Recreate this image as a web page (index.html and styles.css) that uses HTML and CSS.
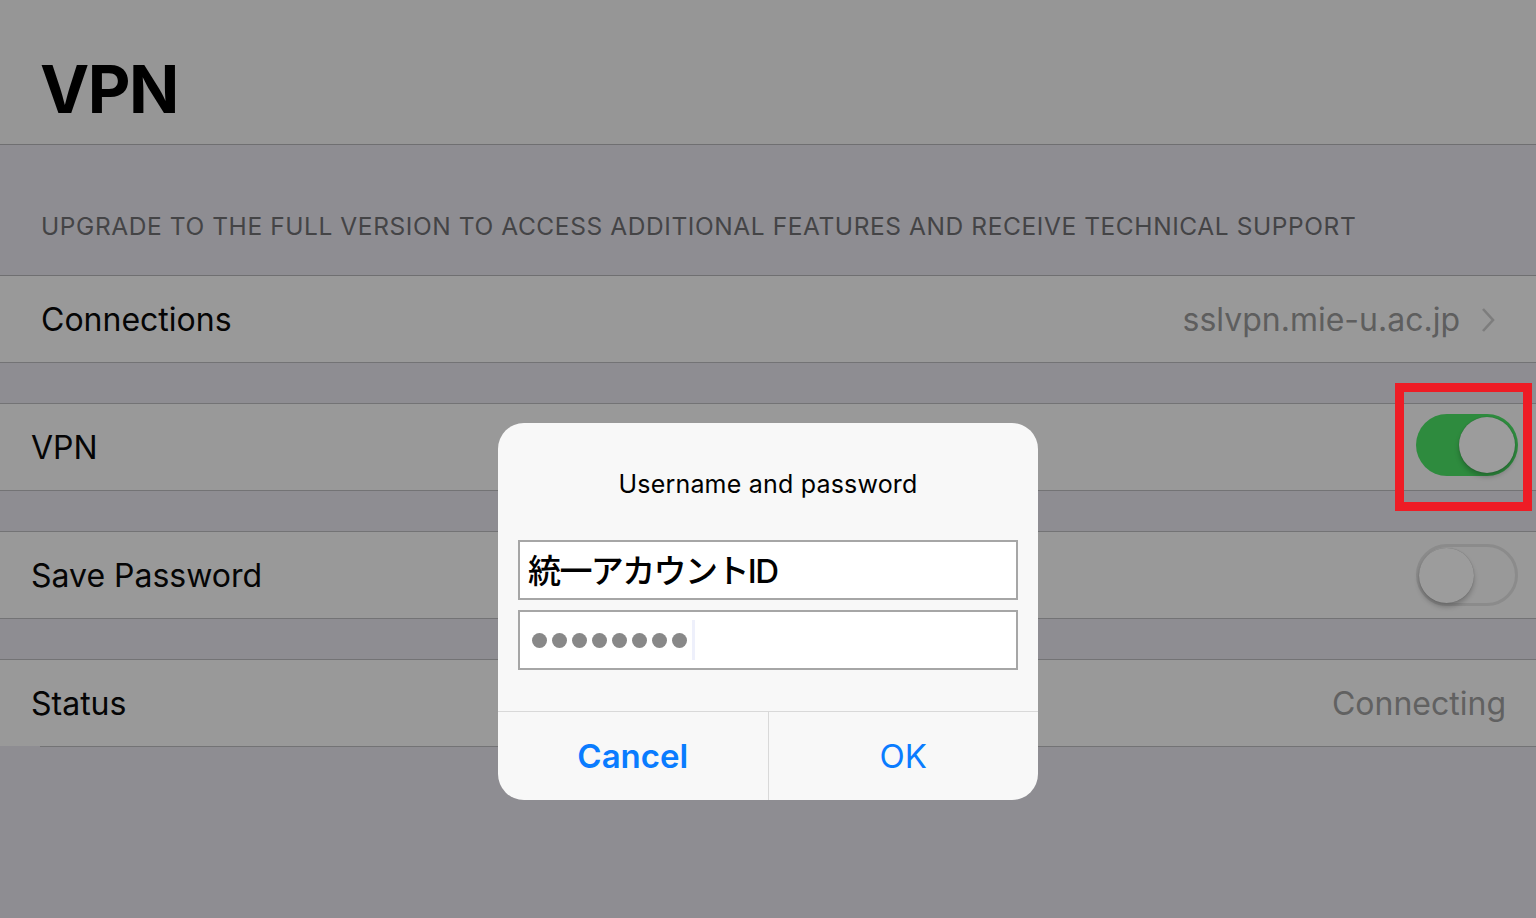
FILE: index.html
```html
<!DOCTYPE html>
<html lang="ja">
<head>
  <meta charset="UTF-8" />
  <title>VPN</title>
  <link rel="stylesheet" href="styles.css">
</head>
<body>
  <header class="nav-header">
    <h1>VPN</h1>
  </header>

  <div class="group-note">UPGRADE TO THE FULL VERSION TO ACCESS ADDITIONAL FEATURES AND RECEIVE TECHNICAL SUPPORT</div>

  <div class="cell cell-wide">
    <span class="cell-label">Connections</span>
    <span class="cell-detail">sslvpn.mie-u.ac.jp
      <svg class="chevron" width="16" height="26" viewBox="0 0 16 26"><path d="M3 2 L13 13 L3 24" fill="none" stroke="#7d7d7d" stroke-width="2.6"/></svg>
    </span>
  </div>

  <div class="spacer"></div>

  <div class="cell">
    <span class="cell-label">VPN</span>
    <div class="highlight">
      <div class="switch on"><div class="knob"></div></div>
    </div>
  </div>

  <div class="spacer"></div>

  <div class="cell">
    <span class="cell-label">Save Password</span>
    <div class="switch off"><div class="knob"></div></div>
  </div>

  <div class="spacer"></div>

  <div class="cell cell-last">
    <span class="cell-label">Status</span>
    <span class="cell-detail status">Connecting</span>
  </div>

  <div class="alert">
    <div class="alert-body">
      <div class="alert-title">Username and password</div>
      <div class="field field-user">統一アカウントID</div>
      <div class="field field-pass">
        <span class="dot"></span><span class="dot"></span><span class="dot"></span><span class="dot"></span>
        <span class="dot"></span><span class="dot"></span><span class="dot"></span><span class="dot"></span>
        <span class="caret"></span>
      </div>
    </div>
    <div class="alert-actions">
      <div class="alert-btn cancel">Cancel</div>
      <div class="alert-btn ok">OK</div>
    </div>
  </div>
</body>
</html>
```

FILE: styles.css
```css
body {
  margin: 0;
  width: 1536px;
  height: 918px;
  overflow: hidden;
  background: #8e8d92;
  font-family: Inter, "Noto Sans", "Noto Sans CJK JP", sans-serif;
  position: relative;
}

.nav-header {
  height: 144px;
  background: #969696;
  border-bottom: 1px solid #6f6f71;
  display: flex;
  align-items: flex-end;
}

.nav-header h1 {
  margin: 0 0 22px 40px;
  font-size: 66px;
  font-weight: 700;
  color: #000;
  letter-spacing: -1.5px;
  line-height: 1;
}

.group-note {
  height: 131px;
  padding-left: 41px;
  display: flex;
  align-items: center;
  padding-top: 32px;
  box-sizing: border-box;
  font-size: 24.5px;
  color: #444446;
  letter-spacing: 0.58px;
  border-bottom: 1px solid #6f6f71;
}

.cell {
  height: 86px;
  background: #999999;
  border-bottom: 1px solid #737375;
  display: flex;
  align-items: center;
  justify-content: space-between;
  padding: 0 18px 0 31px;
  font-size: 32px;
  color: #050505;
}

.cell-wide {
  padding-left: 41px;
  padding-right: 40px;
}

.spacer {
  height: 40px;
  border-bottom: 1px solid #737375;
}

.cell-last {
  border-bottom: none;
  position: relative;
  padding-right: 30px;
}

.cell-last::after {
  content: "";
  position: absolute;
  left: 40px;
  right: 0;
  bottom: -1px;
  height: 1px;
  background: #737375;
}

.cell-detail {
  color: #5e5e5e;
  display: flex;
  align-items: center;
  gap: 20px;
}

.chevron {
  margin-top: 2px;
}

.highlight {
  border: 9px solid #ee1c25;
  width: 137px;
  height: 128px;
  box-sizing: border-box;
  margin: -21px -14px -21px 0;
  display: flex;
  align-items: center;
  justify-content: flex-end;
  padding: 0 5px 4px 0;
}

.switch {
  width: 102px;
  height: 62px;
  border-radius: 31px;
  box-sizing: border-box;
  display: flex;
  align-items: center;
  padding: 3px;
}

.switch.on {
  background: #2e8b3e;
  justify-content: flex-end;
}

.switch.off {
  border: 3px solid #8b8b8b;
  padding: 0;
  justify-content: flex-start;
}

.switch .knob {
  width: 56px;
  height: 56px;
  border-radius: 50%;
  background: #9c9c9c;
  box-shadow: 0 4px 5px rgba(0, 0, 0, 0.22), 0 0 1px rgba(0, 0, 0, 0.3);
}

.switch.off .knob {
  width: 55px;
  height: 55px;
}

.status {
  color: #616161;
}

.alert {
  position: absolute;
  left: 498px;
  top: 423px;
  width: 540px;
  height: 377px;
  border-radius: 26px;
  background: #f8f8f8;
  overflow: hidden;
  display: flex;
  flex-direction: column;
}

.alert-body {
  flex: 1;
  padding: 46px 20px 0;
  display: flex;
  flex-direction: column;
  gap: 10px;
}

.alert-title {
  text-align: center;
  font-size: 25px;
  color: #000;
  margin-bottom: 31px;
  letter-spacing: 0.2px;
}

.field {
  height: 60px;
  box-sizing: border-box;
  border: 2px solid #a6a6a6;
  background: #fff;
  display: flex;
  align-items: center;
  padding-left: 8px;
}

.field-user {
  font-size: 33px;
  font-weight: 500;
  color: #000;
  letter-spacing: -1.6px;
  padding-bottom: 2px;
}

.field-pass {
  padding-left: 12px;
  gap: 5px;
}

.dot {
  width: 15px;
  height: 15px;
  border-radius: 50%;
  background: #888888;
}

.caret {
  width: 3px;
  height: 40px;
  background: #eef0fb;
}

.alert-actions {
  height: 88px;
  border-top: 1px solid #d9d9d9;
  display: flex;
}

.alert-btn {
  flex: 1;
  display: flex;
  align-items: center;
  justify-content: center;
  font-size: 33px;
  color: #0a7cff;
}

.alert-btn.cancel {
  font-weight: 600;
  border-right: 1px solid #d9d9d9;
}
```
